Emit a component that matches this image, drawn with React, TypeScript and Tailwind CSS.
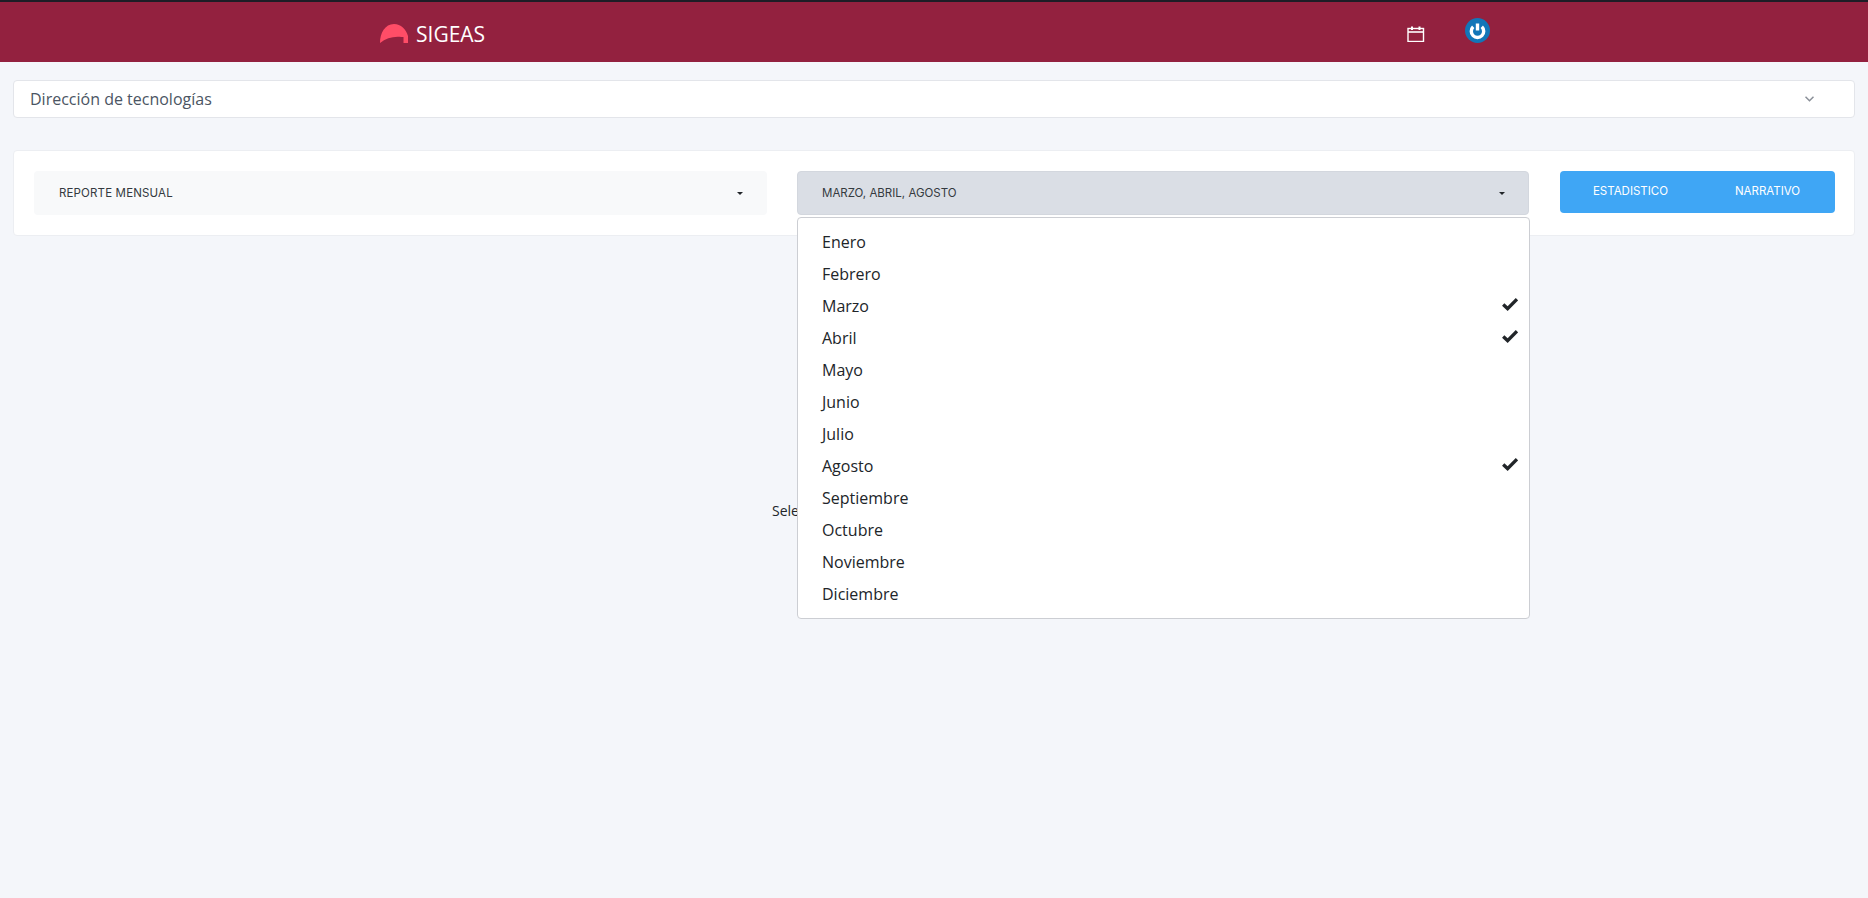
import React from "react";

const months = ["Enero","Febrero","Marzo","Abril","Mayo","Junio","Julio","Agosto","Septiembre","Octubre","Noviembre","Diciembre"];
const selected = ["Marzo","Abril","Agosto"];

function Caret() {
  return <span className="w-0 h-0 border-x-[3.5px] border-x-transparent border-t-[3.5px] border-t-[#212529]" />;
}

function Check() {
  return (
    <svg width="16" height="14" viewBox="0 0 16 14" className="text-[#212529] mb-[4px]">
      <path d="M1.2 7.6 L5.6 11.6 L15 2.2" fill="none" stroke="currentColor" strokeWidth="3.4" />
    </svg>
  );
}

export default function App() {
  return (
    <div className="min-h-[898px] bg-[#f4f6fa] font-['Open_Sans',sans-serif] flex flex-col">
      <header className="h-[62px] bg-[#93213f] border-t-2 border-[#1d1d26] flex items-center relative">
        <div className="ml-[380px] mt-[3px] flex items-center gap-[8px]">
          <svg width="28" height="19" viewBox="0 0 28 19">
            <path d="M0 19 C0 9 5 0 14 0 C21 0 26 5 28 12 L28 19 L23.5 19 L23.5 13 L21.5 13 C14 12 6 14 0 19 Z" fill="#ff4d67" />
          </svg>
          <span className="text-[21px] leading-[28px] text-white">SIGEAS</span>
        </div>
        <svg width="18" height="16" viewBox="0 0 18 16" className="absolute left-[1407px] top-[24px] text-white" fill="none" stroke="currentColor">
          <rect x="1" y="2.5" width="15.5" height="13" strokeWidth="1.4" />
          <path d="M1 6 H16.5" strokeWidth="1.6" />
          <path d="M5 0.5 V4 M12.5 0.5 V4" strokeWidth="2" />
        </svg>
        <svg width="25" height="25" viewBox="0 0 25 25" className="absolute left-[1465px] top-[16px]" fill="none">
          <circle cx="12.5" cy="12.5" r="12.5" fill="#1276b8" />
          <path d="M8.2 8.8 A6.2 6.2 0 1 0 16.8 8.8" stroke="white" strokeWidth="3.4" />
          <path d="M12.5 5.5 V12.5" stroke="white" strokeWidth="3.4" />
        </svg>
      </header>

      <div className="mx-[13px] mt-[18px] h-[38px] bg-white border border-[#e3e5ea] rounded-[4px] flex items-center justify-between pl-[16px] pr-[40px]">
        <span className="text-[16px] text-[#4b5563]">Dirección de tecnologías</span>
        <svg width="9" height="6" viewBox="0 0 9 6" fill="none" stroke="#8a8f98" strokeWidth="1.5">
          <path d="M0.5 0.8 L4.5 4.8 L8.5 0.8" />
        </svg>
      </div>

      <div className="mx-[13px] mt-[32px] h-[86px] bg-white border border-[#eceef2] rounded-[4px] flex items-start pl-[20px] pt-[20px] relative">
        <div className="w-[733px] h-[44px] bg-[#f8f9fa] rounded-[4px] flex items-center justify-between pl-[25px] pr-[24px] font-['Inter',sans-serif] text-[11.5px] tracking-[0.15px] text-[#343a40]">
          <span className="pt-[1px]">REPORTE MENSUAL</span>
          <Caret />
        </div>
        <div className="ml-[30px] w-[732px] relative">
          <div className="h-[44px] bg-[#dadee5] border border-[#d3d7de] rounded-[4px] flex items-center justify-between pl-[24px] pr-[23px] font-['Inter',sans-serif] text-[11.5px] text-[#343a40]">
            <span className="pt-[1px]">MARZO, ABRIL, AGOSTO</span>
            <Caret />
          </div>
          <ul className="absolute z-10 left-0 top-[46px] w-[733px] h-[402px] bg-white border border-[#ccced3] rounded-[4px] pt-[8px] text-[16px] text-[#212529]">
            {months.map((m) => (
              <li key={m} className="h-[32px] pl-[24px] pr-[11px] flex items-center justify-between">
                <span>{m}</span>
                {selected.includes(m) && <Check />}
              </li>
            ))}
          </ul>
        </div>
        <div className="ml-[31px] w-[275px] h-[42px] bg-[#3fa6f5] rounded-[4px] flex items-center font-['Inter',sans-serif] text-[11.5px] text-white">
          <span className="w-[137px] text-center pl-[4px]">ESTADISTICO</span>
          <span className="w-[138px] text-center pl-[3px]">NARRATIVO</span>
        </div>
      </div>

      <div className="mt-[265px] flex justify-center">
        <p className="w-[324px] text-[14px] leading-[20px] text-[#212529] whitespace-nowrap">Seleccione los parámetros del reporte</p>
      </div>
    </div>
  );
}
